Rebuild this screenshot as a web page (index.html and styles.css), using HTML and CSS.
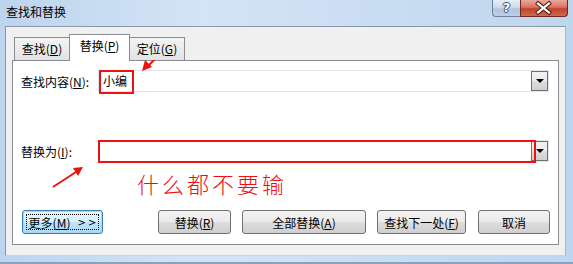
FILE: index.html
```html
<!DOCTYPE html>
<html>
<head>
<meta charset="utf-8">
<link rel="stylesheet" href="styles.css">
</head>
<body>
<div class="window">
  <div class="titlebar">
    <div class="title">查找和替换</div>
    <div class="caption">
      <div class="cap-help">?</div>
      <div class="cap-close">
        <svg width="48" height="17" viewBox="0 0 48 17">
          <path d="M18 3.5 L29 12.5 M29 3.5 L18 12.5" stroke="#4a2420" stroke-width="4.2" stroke-linecap="square"/>
          <path d="M18 3.5 L29 12.5 M29 3.5 L18 12.5" stroke="#ffffff" stroke-width="2.2" stroke-linecap="square"/>
        </svg>
      </div>
    </div>
  </div>
  <div class="client">
    <div class="tabs">
      <div class="tab">查找(<u>D</u>)</div>
      <div class="tab tab-active">替换(<u>P</u>)</div>
      <div class="tab">定位(<u>G</u>)</div>
    </div>
    <div class="panel">
      <div class="row">
        <div class="label">查找内容(<u>N</u>):</div>
        <div class="combo">
          <div class="edit">小编</div>
          <div class="drop"><span class="tri"></span></div>
          <div class="mark mark-find"></div>
        </div>
      </div>
      <div class="row row-replace">
        <div class="label">替换为(<u>I</u>):</div>
        <div class="combo">
          <div class="edit"></div>
          <div class="drop"><span class="tri"></span></div>
          <div class="mark mark-replace"></div>
        </div>
      </div>
      <div class="hint">什么都不要输</div>
      <div class="buttons">
        <div class="btn btn-more"><span class="focus">更多(<u>M</u>)<span class="chev">&gt; &gt;</span></span></div>
        <div class="spacer"></div>
        <div class="btn btn-r">替换(<u>R</u>)</div>
        <div class="btn btn-a">全部替换(<u>A</u>)</div>
        <div class="btn btn-f">查找下一处(<u>F</u>)</div>
        <div class="btn btn-c">取消</div>
      </div>
    </div>
  </div>
</div>
<svg class="arrows" width="573" height="264" viewBox="0 0 573 264">
  <line x1="167" y1="47" x2="149" y2="65" stroke="#e8140f" stroke-width="2"/>
  <polygon points="142,71 145,60 152,67" fill="#e8140f"/>
  <line x1="53" y1="187" x2="76" y2="172" stroke="#e8140f" stroke-width="2"/>
  <polygon points="83,167 73,168 78,176" fill="#e8140f"/>
</svg>
</body>
</html>
```

FILE: styles.css
```css
html, body {
  margin: 0;
  padding: 0;
}
body {
  width: 573px;
  height: 264px;
  overflow: hidden;
  position: relative;
  font-family: "Noto Sans CJK SC", "Noto Sans", sans-serif;
  font-size: 12px;
  color: #000;
  background: linear-gradient(to right, #bdd4ee 0%, #d3e4f6 35%, #c8dcf2 70%, #bfd6ef 100%);
}
.window {
  width: 573px;
  height: 264px;
  display: flex;
  flex-direction: column;
  box-sizing: border-box;
  border-bottom: 2px solid #8aa2bd;
}
.titlebar {
  height: 26px;
  display: flex;
  justify-content: space-between;
  align-items: flex-start;
  padding-left: 6px;
  flex: none;
}
.title {
  line-height: 22px;
  padding-top: 1px;
  font-size: 12px;
}
.caption {
  display: flex;
  margin-right: 5px;
}
.cap-help {
  width: 28px;
  height: 17px;
  box-sizing: border-box;
  border: 1px solid #6d819b;
  border-top: none;
  border-right: none;
  border-bottom-left-radius: 4px;
  background: linear-gradient(#e4edf7 0%, #cfdcec 45%, #b1c5de 55%, #bccee4 100%);
  color: #fff;
  font-weight: bold;
  font-family: "DejaVu Sans", sans-serif;
  font-size: 13px;
  line-height: 15px;
  text-align: center;
  text-shadow: 1px 0 0 #3e4b5c, -1px 0 0 #3e4b5c, 0 1px 0 #3e4b5c, 0 -1px 0 #3e4b5c;
}
.cap-close {
  width: 48px;
  height: 17px;
  box-sizing: border-box;
  border: 1px solid #6e2a22;
  border-top: none;
  border-bottom-right-radius: 4px;
  background: linear-gradient(#e9a99d 0%, #d9735f 45%, #c4402a 55%, #d26a50 100%);
  overflow: hidden;
}
.cap-close svg {
  display: block;
  margin-left: -1px;
}
.client {
  margin: 0 7px 0 5px;
  height: 230px;
  box-sizing: border-box;
  background: #f0f0f0;
  border: 1px solid #8b97a6;
  border-bottom-color: #c9d4df;
  border-right-color: #a9b6c4;
  padding: 7px 6px 10px 6px;
  display: flex;
  flex-direction: column;
  flex: none;
}
.tabs {
  display: flex;
  align-items: flex-end;
  height: 26px;
  padding-left: 2px;
  position: relative;
  z-index: 1;
}
.tab {
  height: 23px;
  box-sizing: border-box;
  border: 1px solid #898c95;
  border-bottom: none;
  background: linear-gradient(#f3f3f3, #e3e3e3);
  margin-bottom: 0;
  line-height: 21px;
  text-align: center;
  width: 56px;
}
.tab + .tab {
  margin-left: -1px;
}
.tab-active {
  width: 61px;
  height: 27px;
  margin-bottom: -1px;
  background: #ffffff;
  line-height: 22px;
  padding-bottom: 3px;
}
.panel {
  height: 186px;
  box-sizing: border-box;
  border: 1px solid #898c95;
  background: #ffffff;
  padding: 9px 8px 0 8px;
  display: flex;
  flex-direction: column;
}
.row {
  display: flex;
  align-items: center;
  height: 22px;
}
.row-replace {
  margin-top: 48px;
}
.label {
  width: 77px;
  flex: none;
}
.combo {
  position: relative;
  display: flex;
  flex: 1;
  height: 22px;
  box-sizing: border-box;
  border: 1px solid #e2e6ea;
  margin-right: 1px;
}
.edit {
  flex: 1;
  padding-left: 4px;
  line-height: 20px;
}
.drop {
  width: 17px;
  height: 20px;
  box-sizing: border-box;
  border: 1px solid #707070;
  background: linear-gradient(#f2f2f2 0%, #ebebeb 50%, #dddddd 51%, #cfcfcf 100%);
  display: flex;
  align-items: center;
  justify-content: center;
}
.tri {
  width: 0;
  height: 0;
  border-left: 4px solid transparent;
  border-right: 4px solid transparent;
  border-top: 4px solid #000;
}
.mark {
  position: absolute;
  border: 2px solid #ee1212;
  box-sizing: border-box;
}
.mark-find {
  left: 0;
  top: -1px;
  width: 35px;
  height: 24px;
}
.mark-replace {
  left: -1px;
  top: -1px;
  width: 438px;
  height: 23px;
}
.hint {
  margin-top: 10px;
  margin-left: 116px;
  height: 22px;
  line-height: 22px;
  font-size: 22px;
  font-weight: 300;
  letter-spacing: 3px;
  color: #ee1010;
}
.buttons {
  margin-top: 16px;
  display: flex;
  height: 24px;
  padding-left: 1px;
  gap: 11px;
}
.spacer {
  flex: 1;
  margin-left: -22px;
}
.btn {
  height: 24px;
  box-sizing: border-box;
  border: 1px solid #707070;
  border-radius: 3px;
  background: linear-gradient(#f2f2f2 0%, #ebebeb 48%, #dddddd 52%, #cfcfcf 100%);
  display: flex;
  align-items: center;
  justify-content: center;
  flex: none;
}
.btn-more {
  width: 81px;
  border-color: #3c7fb1;
  box-shadow: inset 0 0 0 1px #a6d8f6;
  background: linear-gradient(#eaf6fd 0%, #d9f0fc 48%, #bee6fd 52%, #a7d9f5 100%);
  padding: 3px;
}
.focus {
  display: flex;
  align-items: center;
  justify-content: center;
  width: 100%;
  height: 100%;
  box-sizing: border-box;
  border: 1px dotted #000;
  white-space: pre;
}
.chev {
  margin-left: 7px;
  font-family: "DejaVu Sans", sans-serif;
  font-size: 10px;
  word-spacing: -1px;
}
.btn-r { width: 73px; }
.btn-a { width: 124px; }
.btn-f { width: 89px; }
.btn-c { width: 72px; margin-left: 1px; }
u {
  text-decoration-thickness: 1px;
  text-underline-offset: 1px;
}
.arrows {
  position: absolute;
  left: 0;
  top: 0;
  pointer-events: none;
}
```
